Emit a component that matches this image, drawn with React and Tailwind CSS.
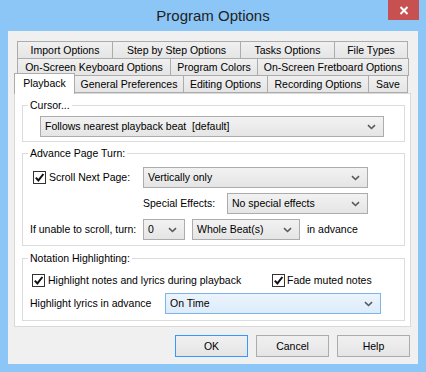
import React from "react";

function Chevron() {
  return (
    <svg width="9" height="6" viewBox="0 0 9 6">
      <path d="M1 1.2l3.5 3.3L8 1.2" stroke="#5a5a5a" strokeWidth="1.6" fill="none" />
    </svg>
  );
}

function Select({ className, value, hot }) {
  return (
    <div
      className={`${className} h-[21px] flex items-center justify-between pl-[4px] pr-[7px] border ${
        hot
          ? "border-[#7eb4ea] bg-gradient-to-b from-[#ecf4fc] to-[#dcecfc]"
          : "border-[#acacac] bg-gradient-to-b from-[#f2f2f2] to-[#e5e5e5]"
      }`}
    >
      <span className="text-[#000] whitespace-pre">{value}</span>
      <Chevron />
    </div>
  );
}

function Checkbox() {
  return (
    <div className="w-[13px] h-[13px] shrink-0 border border-[#333] bg-white flex items-center justify-center">
      <svg width="11" height="11" viewBox="0 0 11 11">
        <path d="M1.8 5.6l2.6 2.8L9.4 2" stroke="#111" strokeWidth="2" fill="none" />
      </svg>
    </div>
  );
}

function Tab({ className, label }) {
  return (
    <div
      className={`${className} h-full -ml-[1px] first:ml-0 flex items-center justify-center border border-[#acacac] bg-gradient-to-b from-[#f0f0f0] to-[#e5e5e5] whitespace-nowrap`}
    >
      {label}
    </div>
  );
}

function Group({ label, className, children }) {
  return (
    <div className={`${className} relative w-[383px] ml-[7px] border border-[#dcdcdc]`}>
      <span className="absolute -top-[8px] left-[5px] bg-white px-[2px] leading-[14px]">{label}</span>
      {children}
    </div>
  );
}

function Button({ label, primary }) {
  return (
    <div
      className={`w-[73px] h-[22px] flex items-center justify-center border bg-gradient-to-b from-[#f0f0f0] to-[#e5e5e5] ${
        primary ? "border-[#3399ff]" : "border-[#acacac]"
      }`}
    >
      {label}
    </div>
  );
}

export default function App() {
  return (
    <div className="w-[426px] h-[372px] bg-[#8cc6f6] flex flex-col font-['Liberation_Sans',Arial,sans-serif] text-[10.5px] text-black leading-none select-none">
      <div className="relative h-[31px] flex items-center justify-center">
        <span className="text-[15px] text-[#1e1e1e] -mt-[1px]">Program Options</span>
        <div className="absolute right-[7px] top-0 w-[31px] h-[20px] bg-[#c75050] flex items-center justify-center">
          <svg width="10" height="9" viewBox="0 0 10 9">
            <path d="M1.5 1l7 7M8.5 1l-7 7" stroke="#fff" strokeWidth="2" />
          </svg>
        </div>
      </div>

      <div className="mx-[8px] h-[333px] bg-[#f0f0f0] flex flex-col pt-[10px]">
        <div className="flex h-[18px] ml-[9px] -mb-[1px]">
          <Tab className="w-[96px]" label="Import Options" />
          <Tab className="w-[129px]" label="Step by Step Options" />
          <Tab className="w-[95px]" label="Tasks Options" />
          <Tab className="w-[74px]" label="File Types" />
        </div>
        <div className="flex h-[18px] ml-[9px]">
          <Tab className="w-[154px]" label="On-Screen Keyboard Options" />
          <Tab className="w-[88px]" label="Program Colors" />
          <Tab className="w-[152px]" label="On-Screen Fretboard Options" />
        </div>
        <div className="flex items-end h-[18px] ml-[6px] -mt-[1px]">
          <div className="relative z-10 w-[61px] h-[21px] -mb-[1px] bg-white border border-b-0 border-[#acacac] flex justify-center pt-[4px]">
            Playback
          </div>
          <div className="flex h-[18px] -ml-[1px]">
            <Tab className="w-[110px]" label="General Preferences" />
            <Tab className="w-[85px]" label="Editing Options" />
            <Tab className="w-[102px]" label="Recording Options" />
            <Tab className="w-[40px]" label="Save" />
          </div>
        </div>

        <div className="ml-[6px] w-[397px] h-[234px] bg-white border border-[#d9d9d9] flex flex-col">
          <Group label="Cursor..." className="mt-[11px] h-[37px] pt-[10px]">
            <Select className="ml-[17px] w-[344px] h-[20px]" value="Follows nearest playback beat  [default]" />
          </Group>

          <Group label="Advance Page Turn:" className="mt-[11px] h-[93px] pt-[13px] pl-[7px] flex flex-col gap-[5px]">
            <div className="flex items-center">
              <div className="w-[113px] flex items-center pl-[3px] gap-[3px]">
                <Checkbox />
                <span>Scroll Next Page:</span>
              </div>
              <Select className="w-[225px]" value="Vertically only" />
            </div>
            <div className="flex items-center">
              <div className="w-[113px]" />
              <span className="w-[84px]">Special Effects:</span>
              <Select className="w-[141px]" value="No special effects" />
            </div>
            <div className="flex items-center">
              <span className="w-[113px]">If unable to scroll, turn:</span>
              <Select className="w-[42px]" value="0" />
              <Select className="w-[108px] ml-[7px]" value="Whole Beat(s)" />
              <span className="ml-[7px]">in advance</span>
            </div>
          </Group>

          <Group label="Notation Highlighting:" className="mt-[12px] h-[63px] pt-[15px] pl-[7px] flex flex-col gap-[6px]">
            <div className="flex items-center h-[13px]">
              <div className="w-[242px] flex items-center pl-[2px] gap-[3px]">
                <Checkbox />
                <span>Highlight notes and lyrics during playback</span>
              </div>
              <div className="flex items-center gap-[2px]">
                <Checkbox />
                <span>Fade muted notes</span>
              </div>
            </div>
            <div className="flex items-center">
              <span className="w-[135px]">Highlight lyrics in advance</span>
              <Select className="w-[216px]" value="On Time" hot />
            </div>
          </Group>
        </div>

        <div className="mt-[8px] mr-[8px] flex justify-end gap-[8px]">
          <Button label="OK" primary />
          <Button label="Cancel" />
          <Button label="Help" />
        </div>
      </div>
    </div>
  );
}
